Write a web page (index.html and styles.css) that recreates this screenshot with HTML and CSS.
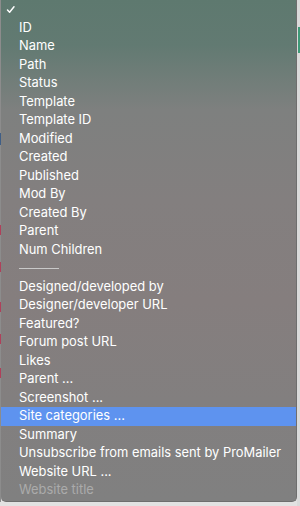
FILE: index.html
```html
<!DOCTYPE html>
<html>
<head>
<meta charset="utf-8">
<link rel="stylesheet" href="styles.css">
</head>
<body>
<div class="screen">
  <div class="edge-left">
    <span class="mark mark-blue m1"></span>
    <span class="mark mark-red m2"></span>
    <span class="mark mark-red m3"></span>
    <span class="mark mark-red m4"></span>
    <span class="mark mark-red m5"></span>
    <span class="mark mark-red m6"></span>
  </div>
  <ul class="menu">
    <li class="item check-row">
      <svg class="check" width="10" height="10" viewBox="0 0 10 10"><polyline points="1.5,5 3.6,7.2 8,1.8" fill="none" stroke="#fff" stroke-width="1.5" stroke-linecap="round" stroke-linejoin="round"/></svg>
    </li>
    <li class="item">ID</li>
    <li class="item">Name</li>
    <li class="item">Path</li>
    <li class="item">Status</li>
    <li class="item">Template</li>
    <li class="item">Template ID</li>
    <li class="item">Modified</li>
    <li class="item">Created</li>
    <li class="item">Published</li>
    <li class="item">Mod By</li>
    <li class="item">Created By</li>
    <li class="item">Parent</li>
    <li class="item">Num Children</li>
    <li class="item sep-row"><span class="sep"></span></li>
    <li class="item">Designed/developed by</li>
    <li class="item">Designer/developer URL</li>
    <li class="item">Featured?</li>
    <li class="item">Forum post URL</li>
    <li class="item">Likes</li>
    <li class="item">Parent ...</li>
    <li class="item">Screenshot ...</li>
    <li class="item selected">Site categories ...</li>
    <li class="item">Summary</li>
    <li class="item">Unsubscribe from emails sent by ProMailer</li>
    <li class="item">Website URL ...</li>
    <li class="item disabled">Website title</li>
  </ul>
  <div class="edge-right">
    <span class="tab"></span>
  </div>
</div>
</body>
</html>
```
FILE: styles.css
```css
* { box-sizing: border-box; }
html, body {
  margin: 0;
  padding: 0;
  background: #e2e2e2;
}
.screen {
  display: flex;
  width: 300px;
  height: 506px;
  overflow: hidden;
}
.edge-left {
  position: relative;
  width: 1px;
  height: 502px;
  background: #8c8c8c;
  flex: none;
}
.mark {
  position: absolute;
  left: 0;
  width: 1px;
  height: 10px;
}
.mark-blue { background: #3f5e86; }
.mark-red { background: #b0405a; }
.m1 { top: 133px; height: 12px; }
.m2 { top: 225px; }
.m3 { top: 262px; }
.m4 { top: 302px; }
.m5 { top: 334px; }
.m6 { top: 368px; }
.menu {
  list-style: none;
  margin: 0;
  padding: 0 0 3px;
  width: 296px;
  height: 502px;
  flex: none;
  border-right: 1px solid #6e6e6e;
  border-bottom: 1px solid #6e6e6e;
  border-radius: 0 0 5px 5px;
  background: linear-gradient(to bottom, #5e796f 0%, #627a72 9%, #6f7d78 15%, #7e807f 22%, #837f7f 40%, #857e7e 60%, #827f7f 80%, #808080 100%);
  font-family: Inter, "Noto Sans", sans-serif;
  font-size: 12.9px;
  color: #ffffff;
}
.item {
  height: 18.5px;
  line-height: 17px;
  padding-left: 18px;
  white-space: nowrap;
}
.check-row {
  position: relative;
}
.check {
  position: absolute;
  left: 4.5px;
  top: 5px;
}
.sep-row {
  display: flex;
  align-items: center;
}
.sep {
  display: block;
  width: 40px;
  height: 1px;
  background: #c9c9c9;
}
.selected {
  background: #5e93ef;
}
.disabled {
  color: #ababab;
}
.edge-right {
  position: relative;
  flex: 1;
  height: 506px;
  background: #dadada;
}
.tab {
  position: absolute;
  top: 27px;
  left: 1px;
  width: 2px;
  height: 26px;
  background: #3f9a78;
}
```
